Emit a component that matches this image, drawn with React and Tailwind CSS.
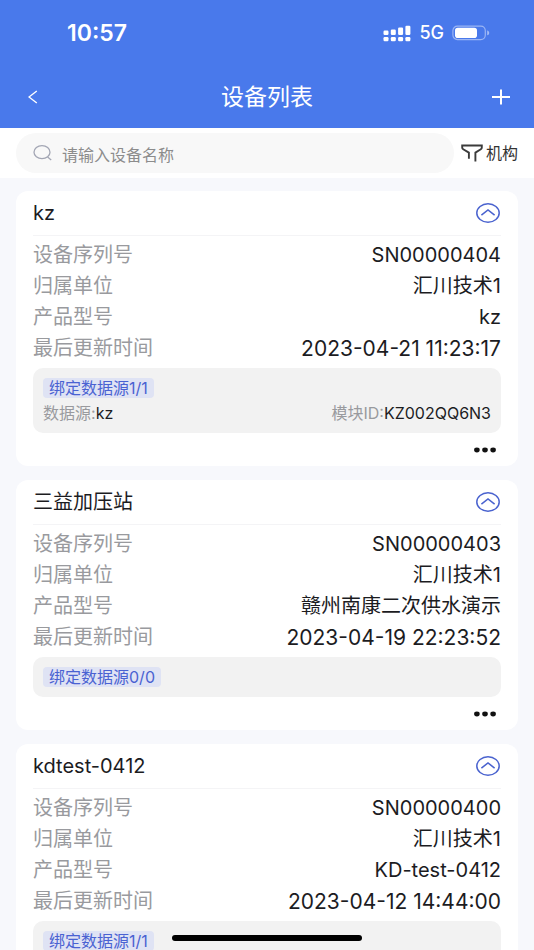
import { useState } from 'react';

const devices = [
  {
    name: 'kz',
    serial: 'SN00000404',
    owner: '汇川技术1',
    model: 'kz',
    updatedAt: '2023-04-21 11:23:17',
    bound: '1/1',
    sources: [{ name: 'kz', moduleId: 'KZ002QQ6N3' }],
  },
  {
    name: '三益加压站',
    serial: 'SN00000403',
    owner: '汇川技术1',
    model: '赣州南康二次供水演示',
    updatedAt: '2023-04-19 22:23:52',
    bound: '0/0',
    sources: [],
  },
  {
    name: 'kdtest-0412',
    serial: 'SN00000400',
    owner: '汇川技术1',
    model: 'KD-test-0412',
    updatedAt: '2023-04-12 14:44:00',
    bound: '1/1',
    sources: [],
  },
];

const SignalIcon = () => (
  <svg width="28" height="17" viewBox="0 0 28 17" fill="currentColor" aria-hidden="true">
    <rect x="0.5" y="5.5" width="5" height="4.5" rx="1.2" />
    <rect x="7.8" y="4.5" width="5" height="5.5" rx="1.2" />
    <rect x="15.1" y="2.6" width="5" height="7.4" rx="1.2" />
    <rect x="22.4" y="0.7" width="5" height="9.3" rx="1.2" />
    <rect x="0.5" y="12" width="5" height="4.2" rx="1.2" />
    <rect x="7.8" y="12" width="5" height="4.2" rx="1.2" />
    <rect x="15.1" y="12" width="5" height="4.2" rx="1.2" />
    <rect x="22.4" y="12" width="5" height="4.2" rx="1.2" />
  </svg>
);

const BatteryIcon = () => (
  <svg width="38" height="16" viewBox="0 0 38 16" fill="none" aria-hidden="true">
    <rect x="0.9" y="1.2" width="32.4" height="13.4" rx="4.5" stroke="#fff" strokeOpacity="0.45" strokeWidth="1.2" />
    <rect x="3" y="2.8" width="22" height="10.2" rx="2.8" fill="#fff" />
    <path d="M35.2 5.6c1.3.4 2 1.2 2 2.3s-.7 1.9-2 2.3z" fill="#fff" fillOpacity="0.5" />
  </svg>
);

const FilterIcon = () => (
  <svg width="22" height="18" viewBox="0 0 22 18" fill="none" stroke="#3b3b3b" strokeWidth="1.9" aria-hidden="true">
    <path d="M7.9 14.8V8.6L2.2 5.2C1.5 4.8 1.2 4.2 1.2 3.4V1.5h19.6v1.9c0 .8-.3 1.4-1 1.8l-5.4 3.4v8.8" />
  </svg>
);

const CollapseIcon = () => (
  <svg width="24" height="20" viewBox="0 0 24 20" fill="none" stroke="#4a63cf" aria-hidden="true">
    <ellipse cx="12" cy="10" rx="11.2" ry="9.2" strokeWidth="1.5" />
    <path d="M5.4 12.2 12 6.9l6.6 5.3" strokeWidth="1.5" />
  </svg>
);

const MoreIcon = () => (
  <svg width="22" height="6" viewBox="0 0 22 6" fill="#111" aria-hidden="true">
    <ellipse cx="2.9" cy="3" rx="2.8" ry="2.4" />
    <ellipse cx="11" cy="3" rx="2.8" ry="2.4" />
    <ellipse cx="19.1" cy="3" rx="2.8" ry="2.4" />
  </svg>
);

const Row = ({ label, value, valueClass }) => (
  <div className="flex justify-between leading-[31px]">
    <dt className="text-[#999a9e]">{label}</dt>
    <dd className={valueClass}>{value}</dd>
  </div>
);

const DeviceCard = ({ device }) => {
  const [open, setOpen] = useState(true);

  return (
    <article className="rounded-xl bg-white px-[17px] text-xl text-[#1c1c1f]">
      <div className="flex h-[45px] items-center justify-between border-b border-[#f4f4f6]">
        <h2>{device.name}</h2>
        <button type="button" aria-label="展开或收起" className="pr-px" onClick={() => setOpen(!open)}>
          <CollapseIcon />
        </button>
      </div>
      {open && (
        <>
          <dl className="pt-1">
            <Row label="设备序列号" value={device.serial} />
            <Row label="归属单位" value={device.owner} />
            <Row label="产品型号" value={device.model} />
            <Row label="最后更新时间" value={device.updatedAt} valueClass="text-[21px] leading-[31px]" />
          </dl>
          <div className="mt-1 rounded-[10px] bg-[#f2f2f2] p-[10px] text-base">
            <div className="flex">
              <span className="rounded bg-[#dfe3f4] px-[6px] leading-5 text-[#4a62d2]">绑定数据源{device.bound}</span>
            </div>
            {device.sources.map((source) => (
              <div key={source.moduleId} className="mt-[5px] flex justify-between leading-5">
                <p>
                  <span className="text-[#999a9e]">数据源:</span>
                  {source.name}
                </p>
                <p>
                  <span className="text-[#999a9e]">模块ID:</span>
                  {source.moduleId}
                </p>
              </div>
            ))}
          </div>
        </>
      )}
      <div className="flex h-[33px] items-center justify-end pr-[5px]">
        <button type="button" aria-label="更多">
          <MoreIcon />
        </button>
      </div>
    </article>
  );
};

const App = () => {
  const [keyword, setKeyword] = useState('');

  return (
    <div className="flex h-screen flex-col bg-[#f7f8fc] font-['Inter','Noto_Sans_CJK_SC',sans-serif]">
      <header className="bg-[#4979eb] text-white">
        {/* Status bar */}
        <div className="flex h-[66px] items-center justify-between pr-11 pl-[67px]">
          <span className="text-[23px] font-semibold">10:57</span>
          <div className="flex items-center gap-2">
            <SignalIcon />
            <span className="text-lg font-medium">5G</span>
            <BatteryIcon />
          </div>
        </div>
        {/* Nav bar */}
        <div className="grid h-[62px] grid-cols-[1fr_auto_1fr] items-center px-6">
          <button type="button" aria-label="返回" className="justify-self-start pl-1">
            <svg width="10" height="14" viewBox="0 0 10 14" fill="none" stroke="currentColor" strokeWidth="1.4" aria-hidden="true">
              <path d="M8.8 1 1 7l7.8 6" />
            </svg>
          </button>
          <h1 className="text-[23px]">设备列表</h1>
          <button type="button" aria-label="新增" className="justify-self-end">
            <svg width="18" height="16" viewBox="0 0 18 16" fill="none" stroke="currentColor" strokeWidth="2" aria-hidden="true">
              <path d="M0 8h18M9 0.5v15" />
            </svg>
          </button>
        </div>
      </header>

      {/* Search */}
      <div className="flex h-[50px] shrink-0 items-center gap-[7px] bg-white px-4">
        <label className="flex h-10 flex-1 items-center gap-[10px] rounded-full bg-[#f8f8f8] pl-[17px]">
          <svg width="19" height="16" viewBox="0 0 19 16" fill="none" stroke="#a3a6b4" strokeWidth="1.3" aria-hidden="true">
            <ellipse cx="9" cy="7.2" rx="8" ry="6.5" />
            <path d="m14.6 12 3.6 3" />
          </svg>
          <input
            type="text"
            aria-label="设备名称"
            placeholder="请输入设备名称"
            value={keyword}
            onChange={(e) => setKeyword(e.target.value)}
            className="min-w-0 flex-1 bg-transparent pt-1 text-base outline-none placeholder:text-[#8c8c8c]"
          />
        </label>
        <button type="button" className="flex items-center gap-[3px] text-base text-[#333]">
          <FilterIcon />
          机构
        </button>
      </div>

      {/* Device list */}
      <main className="flex min-h-0 flex-1 flex-col gap-[14px] overflow-y-auto px-4 pt-[13px] pb-6 [scrollbar-width:none]">
        {devices
          .filter((device) => device.name.includes(keyword))
          .map((device) => (
            <DeviceCard key={device.serial} device={device} />
          ))}
      </main>

      <div className="fixed bottom-[9px] left-1/2 h-[6px] w-[190px] -translate-x-1/2 rounded-full bg-black" />
    </div>
  );
};

export default App;
